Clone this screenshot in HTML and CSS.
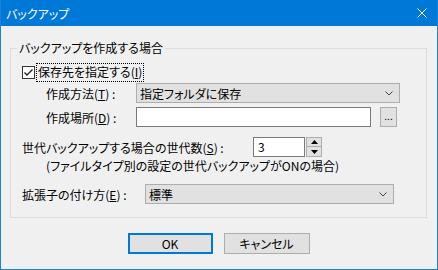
FILE: index.html
```html
<!DOCTYPE html>
<html lang="ja">
<head>
    <meta charset="utf-8">
    <title>バックアップ</title>
    <link rel="stylesheet" href="styles.css">
</head>
<body>

<div class="window">
    <div class="titlebar">
        <span class="title">バックアップ</span>
        <svg class="close" width="10" height="10" viewBox="0 0 10 10">
            <path d="M0.5 0.5 L9.5 9.5 M9.5 0.5 L0.5 9.5" stroke="#fff" stroke-width="1" fill="none"/>
        </svg>
    </div>

    <div class="body">
        <fieldset class="group">
            <legend>バックアップを作成する場合</legend>

            <div class="row row-check">
                <span class="checkbox">
                    <svg width="11" height="11" viewBox="0 0 11 11">
                        <path d="M1.5 5.5 L4 8 L9.5 2.5" stroke="#222" stroke-width="1.4" fill="none"/>
                    </svg>
                </span>
                <span class="focus">保存先を指定する(<u>I</u>)</span>
            </div>

            <div class="row row-method">
                <label class="lbl">作成方法(<u>T</u>) :</label>
                <div class="select sel-method">
                    <span>指定フォルダに保存</span>
                    <svg class="chev" width="8" height="5" viewBox="0 0 8 5">
                        <path d="M0.5 0.5 L4 4 L7.5 0.5" stroke="#444" fill="none"/>
                    </svg>
                </div>
            </div>

            <div class="row row-place">
                <label class="lbl">作成場所(<u>D</u>) :</label>
                <div class="input inp-place"></div>
                <div class="btn-browse">...</div>
            </div>

            <div class="row row-gen">
                <label class="lbl-gen">世代バックアップする場合の世代数(<u>S</u>) :</label>
                <div class="input inp-spin">3</div>
                <div class="spin">
                    <div class="spin-btn"><svg width="7" height="4" viewBox="0 0 7 4"><path d="M3.5 0 L7 4 L0 4 Z" fill="#000"/></svg></div>
                    <div class="spin-btn"><svg width="7" height="4" viewBox="0 0 7 4"><path d="M0 0 L7 0 L3.5 4 Z" fill="#000"/></svg></div>
                </div>
            </div>

            <div class="row row-note">(ファイルタイプ別の設定の世代バックアップがONの場合)</div>

            <div class="row row-ext">
                <label class="lbl-ext">拡張子の付け方(<u>E</u>) :</label>
                <div class="select sel-ext">
                    <span>標準</span>
                    <svg class="chev" width="8" height="5" viewBox="0 0 8 5">
                        <path d="M0.5 0.5 L4 4 L7.5 0.5" stroke="#444" fill="none"/>
                    </svg>
                </div>
            </div>
        </fieldset>

        <div class="buttons">
            <button class="ok">OK</button>
            <button>キャンセル</button>
        </div>
    </div>
</div>

</body>
</html>
```

FILE: styles.css
```css
* {
    box-sizing: border-box;
}
body {
    margin: 0;
    background: #fff;
    font-family: "Noto Sans CJK JP", "Noto Sans", sans-serif;
    font-size: 12px;
    font-feature-settings: "palt";
    color: #000;
}
.window {
    width: 438px;
    height: 270px;
    border: 1px solid #1883d7;
    border-top: none;
    background: #f0f0f0;
}
.titlebar {
    height: 26px;
    background: #0078d7;
    color: #fff;
    display: flex;
    align-items: center;
    justify-content: space-between;
    padding: 0 10px 0 5px;
}
.title {
    font-size: 12px;
}
.body {
    padding: 0 10px 0 9px;
}
.group {
    margin: 14px 0 0 0;
    padding: 0 0 13px 11px;
    border: 1px solid #dcdcdc;
    width: 417px;
    height: 178px;
}
.group legend {
    padding: 0 2px;
    margin-left: -5px;
    line-height: 16px;
}
.row {
    display: flex;
    align-items: center;
}
.row-check {
    height: 18px;
    margin-top: 7px;
}
.checkbox {
    width: 13px;
    height: 13px;
    border: 1px solid #333;
    background: #fff;
    display: flex;
    align-items: center;
    justify-content: center;
}
.focus {
    margin-left: 2px;
    padding: 0 1px;
    height: 17px;
    line-height: 16px;
    outline: 1px dotted #000;
}
.row-method {
    height: 20px;
    margin-top: 2px;
}
.lbl {
    width: 90px;
    margin-left: 24px;
}
.select {
    height: 20px;
    background: #e1e1e1;
    border: 1px solid #adadad;
    display: flex;
    align-items: center;
    justify-content: space-between;
    padding: 0 6px 0 3px;
}
.sel-method {
    width: 264px;
}
.row-place {
    height: 20px;
    margin-top: 4px;
}
.input {
    height: 20px;
    background: #fff;
    border: 1px solid #7a7a7a;
}
.inp-place {
    width: 235px;
}
.btn-browse {
    width: 17px;
    height: 20px;
    margin-left: 9px;
    background: #e1e1e1;
    border: 1px solid #adadad;
    font-size: 10px;
    text-align: center;
    line-height: 16px;
}
.row-gen {
    height: 20px;
    margin-top: 10px;
}
.lbl-gen {
    width: 231px;
}
.inp-spin {
    width: 52px;
    padding-left: 4px;
    line-height: 17px;
}
.spin {
    margin-left: 1px;
    width: 16px;
    height: 20px;
    display: flex;
    flex-direction: column;
}
.spin-btn {
    height: 10px;
    background: #e1e1e1;
    border: 1px solid #adadad;
    display: flex;
    align-items: center;
    justify-content: center;
}
.spin-btn + .spin-btn {
    border-top: none;
}
.row-note {
    height: 16px;
    margin-left: 24px;
}
.row-ext {
    height: 20px;
    margin-top: 11px;
}
.lbl-ext {
    width: 123px;
}
.sel-ext {
    width: 249px;
}
.buttons {
    display: flex;
    justify-content: center;
    gap: 11px;
    margin-top: 15px;
}
button {
    font-family: inherit;
    font-size: 12px;
    font-feature-settings: "palt";
    width: 86px;
    height: 21px;
    padding: 0;
    background: #e1e1e1;
    border: 1px solid #adadad;
    color: #000;
}
.ok {
    width: 85px;
    border: 2px solid #0078d7;
}
```
